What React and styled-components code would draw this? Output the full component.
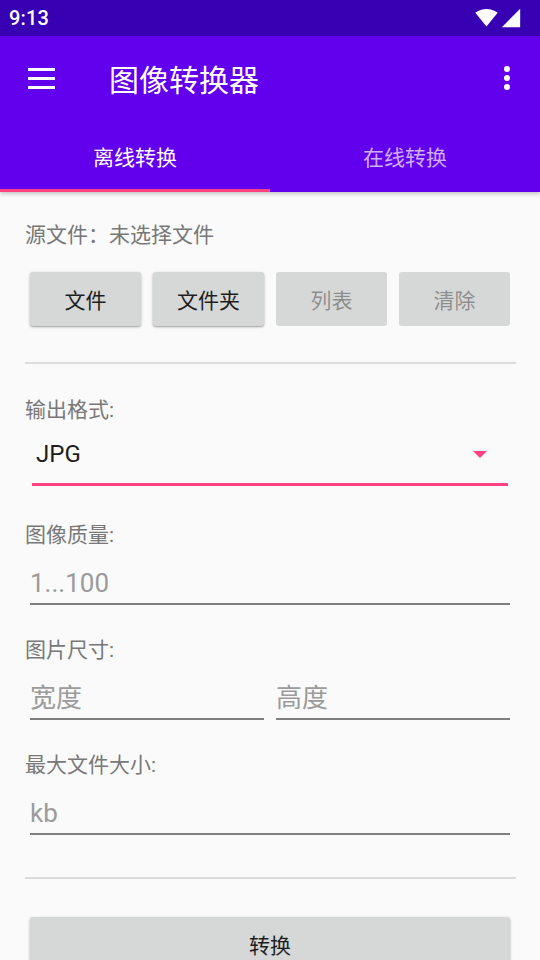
import React from 'react';
import styled, { createGlobalStyle } from 'styled-components';

const GlobalStyle = createGlobalStyle`
  html, body { margin: 0; padding: 0; background: #fafafa; }
  body { font-family: Roboto, "Noto Sans CJK SC", sans-serif; }
  * { box-sizing: border-box; }
`;

const Screen = styled.div`
  width: 540px;
  height: 960px;
  overflow: hidden;
  background: #fafafa;
`;

const StatusBar = styled.div`
  height: 36px;
  background: #3700b3;
  display: flex;
  align-items: center;
  padding: 0 18px 0 9px;
  color: #fff;
`;

const Time = styled.span`
  font-family: Roboto, sans-serif;
  font-size: 20px;
  font-weight: 500;
  letter-spacing: 0.2px;
`;

const StatusIcons = styled.div`
  margin-left: auto;
  display: flex;
  align-items: center;
  gap: 2px;
`;

const AppBar = styled.header`
  background: #6200ee;
  position: relative;
  z-index: 1;
  box-shadow: 0 2px 4px rgba(0, 0, 0, 0.22);
`;

const Toolbar = styled.div`
  height: 84px;
  display: flex;
  align-items: center;
  padding: 0 30px 0 28px;
`;

const Title = styled.h1`
  margin: 0 0 0 54px;
  font-size: 30px;
  font-weight: 400;
  color: #fff;
  font-family: "Noto Sans CJK SC", Roboto, sans-serif;
`;

const Overflow = styled.div`
  margin-left: auto;
  display: flex;
  flex-direction: column;
  gap: 3px;
`;

const Dot = styled.span`
  width: 6px;
  height: 6px;
  border-radius: 50%;
  background: #fff;
`;

const Tabs = styled.div`
  height: 72px;
  display: flex;
`;

const Tab = styled.div`
  flex: 1;
  position: relative;
  display: flex;
  align-items: center;
  justify-content: center;
  font-size: 21px;
  color: ${(p) => (p.$active ? '#fff' : 'rgba(255,255,255,0.7)')};
  &::after {
    content: '';
    display: ${(p) => (p.$active ? 'block' : 'none')};
    position: absolute;
    left: 0;
    right: 0;
    bottom: 0;
    height: 3px;
    background: #ff4081;
  }
`;

const Content = styled.main`
  padding: 0 24px 0 25px;
  display: flex;
  flex-direction: column;
`;

const SourceText = styled.div`
  margin-top: 28px;
  line-height: 30px;
  font-size: 21px;
  color: #777;
`;

const ButtonRow = styled.div`
  margin-top: 22px;
  padding: 0 6px 0 5px;
  display: flex;
  gap: 12px;
`;

const Button = styled.button`
  flex: 1;
  height: 54px;
  border: none;
  border-radius: 3px;
  background: #d6d7d7;
  font-family: "Noto Sans CJK SC", Roboto, sans-serif;
  font-size: 21px;
  color: ${(p) => (p.disabled ? 'rgba(0,0,0,0.36)' : '#1e1e1e')};
  box-shadow: ${(p) =>
    p.disabled ? 'none' : '0 1px 3px rgba(0,0,0,0.28), 0 1px 1px rgba(0,0,0,0.12)'};
  padding: 0;
`;

const Divider = styled.div`
  height: 2px;
  flex-shrink: 0;
  background: #dcdcdc;
  margin-top: ${(p) => p.$top}px;
`;

const Label = styled.div`
  margin-top: ${(p) => p.$top}px;
  line-height: 30px;
  font-size: 21px;
  color: #787878;
`;

const Spinner = styled.div`
  margin: 0 8px 0 7px;
  height: 61px;
  flex-shrink: 0;
  border-bottom: 3px solid #ff4081;
  display: flex;
  align-items: center;
  padding: 0 21px 0 4px;
`;

const SpinnerValue = styled.span`
  font-size: 24px;
  color: #1e1e1e;
`;

const Caret = styled.span`
  margin-left: auto;
  width: 0;
  height: 0;
  border-left: 7px solid transparent;
  border-right: 7px solid transparent;
  border-top: 7px solid #ff4081;
`;

const FieldRow = styled.div`
  margin: 0 6px 0 5px;
  display: flex;
  gap: 12px;
`;

const Input = styled.input`
  flex: 1;
  min-width: 0;
  height: 55px;
  border: none;
  border-bottom: 2px solid #7f7f7f;
  background: transparent;
  padding: 16px 0 4px 0;
  font-family: Roboto, "Noto Sans CJK SC", sans-serif;
  font-size: 26px;
  color: #1e1e1e;
  outline: none;
  &::placeholder {
    color: #9b9b9b;
  }
`;

const ConvertButton = styled(Button)`
  flex: none;
  width: auto;
  margin: 38px 6px 0 5px;
`;

const WifiIcon = () => (
  <svg width="23" height="23" viewBox="0 0 24 24" style={{ marginTop: -1 }}>
    <path
      fill="#fff"
      d="M12.01 21.49L23.64 7c-.45-.34-4.93-4-11.64-4C5.28 3 .81 6.66.36 7l11.63 14.49.01.01.01-.01z"
    />
  </svg>
);

const SignalIcon = () => (
  <svg width="22" height="22" viewBox="0 0 24 24">
    <path fill="#fff" d="M2 22h20V2z" />
  </svg>
);

const MenuIcon = () => (
  <svg width="27" height="21" viewBox="0 0 27 21">
    <rect x="0" y="0" width="27" height="3" fill="#fff" />
    <rect x="0" y="9" width="27" height="3" fill="#fff" />
    <rect x="0" y="18" width="27" height="3" fill="#fff" />
  </svg>
);

export default function App() {
  return (
    <>
      <GlobalStyle />
      <Screen>
        <StatusBar>
          <Time>9:13</Time>
          <StatusIcons>
            <WifiIcon />
            <SignalIcon />
          </StatusIcons>
        </StatusBar>
        <AppBar>
          <Toolbar>
            <MenuIcon />
            <Title>图像转换器</Title>
            <Overflow>
              <Dot />
              <Dot />
              <Dot />
            </Overflow>
          </Toolbar>
          <Tabs>
            <Tab $active>离线转换</Tab>
            <Tab>在线转换</Tab>
          </Tabs>
        </AppBar>
        <Content>
          <SourceText>源文件：未选择文件</SourceText>
          <ButtonRow>
            <Button>文件</Button>
            <Button>文件夹</Button>
            <Button disabled>列表</Button>
            <Button disabled>清除</Button>
          </ButtonRow>
          <Divider $top={36} />
          <Label $top={31}>输出格式:</Label>
          <Spinner>
            <SpinnerValue>JPG</SpinnerValue>
            <Caret />
          </Spinner>
          <Label $top={34}>图像质量:</Label>
          <FieldRow>
            <Input placeholder="1...100" />
          </FieldRow>
          <Label $top={30}>图片尺寸:</Label>
          <FieldRow>
            <Input placeholder="宽度" />
            <Input placeholder="高度" />
          </FieldRow>
          <Label $top={30}>最大文件大小:</Label>
          <FieldRow>
            <Input placeholder="kb" />
          </FieldRow>
          <Divider $top={42} />
          <ConvertButton>转换</ConvertButton>
        </Content>
      </Screen>
    </>
  );
}
